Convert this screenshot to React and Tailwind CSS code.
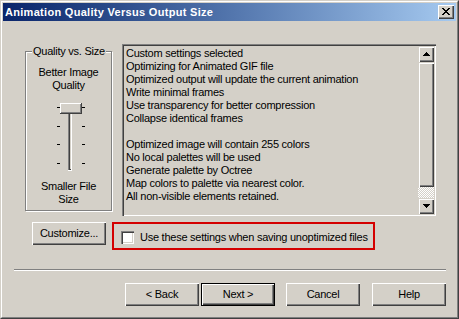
import React from 'react'

const raised = "shadow-[inset_1px_1px_0_#ffffff,inset_-1px_-1px_0_#404040,inset_-2px_-2px_0_#808080]"
const sunken = "shadow-[inset_1px_1px_0_#808080,inset_2px_2px_0_#404040,inset_-1px_-1px_0_#ffffff,inset_-2px_-2px_0_#d4d0c8]"
const scrollBtn = "shadow-[inset_1px_1px_0_#d4d0c8,inset_2px_2px_0_#ffffff,inset_-1px_-1px_0_#404040,inset_-2px_-2px_0_#808080]"

const lines = [
  "Custom settings selected",
  "Optimizing for Animated GIF file",
  "Optimized output will update the current animation",
  "Write minimal frames",
  "Use transparency for better compression",
  "Collapse identical frames",
  "",
  "Optimized image will contain 255 colors",
  "No local palettes will be used",
  "Generate palette by Octree",
  "Map colors to palette via nearest color.",
  "All non-visible elements retained.",
]

function CloseGlyph() {
  const px = [
    [0, 0], [1, 0], [6, 0], [7, 0],
    [1, 1], [2, 1], [5, 1], [6, 1],
    [2, 2], [3, 2], [4, 2], [5, 2],
    [3, 3], [4, 3],
    [2, 4], [3, 4], [4, 4], [5, 4],
    [1, 5], [2, 5], [5, 5], [6, 5],
    [0, 6], [1, 6], [6, 6], [7, 6],
  ]
  return (
    <svg width="8" height="7" shapeRendering="crispEdges">
      {px.map(([x, y]) => <rect key={x + "-" + y} x={x} y={y} width="1" height="1" fill="#000" />)}
    </svg>
  )
}

function Slider() {
  const ticks = [9, 28, 46, 65]
  return (
    <svg width="85" height="76" shapeRendering="crispEdges" className="block">
      {ticks.map((y) => (
        <g key={y}>
          <rect x="31" y={y} width="3" height="1" fill="#000" />
          <rect x="56" y={y} width="3" height="1" fill="#000" />
        </g>
      ))}
      {/* track */}
      <rect x="42" y="5" width="4" height="68" fill="#ffffff" />
      <rect x="42" y="5" width="3" height="67" fill="#808080" />
      <rect x="43" y="6" width="2" height="66" fill="#404040" />
      <rect x="44" y="6" width="1" height="65" fill="#d4d0c8" />
      {/* thumb */}
      <rect x="34" y="5" width="22" height="11" fill="#404040" />
      <rect x="34" y="5" width="21" height="10" fill="#ffffff" />
      <rect x="35" y="6" width="20" height="9" fill="#808080" />
      <rect x="35" y="6" width="19" height="8" fill="#d4d0c8" />
    </svg>
  )
}

function Arrow({ down }) {
  return (
    <svg width="7" height="4" shapeRendering="crispEdges">
      {down ? (
        <path d="M0 0h7v1h-1v1h-1v1h-1v1h-1v-1h-1v-1h-1v-1h-1z" fill="#000" />
      ) : (
        <path d="M3 0h1v1h1v1h1v1h1v1h-7v-1h1v-1h1v-1h1z" fill="#000" />
      )}
    </svg>
  )
}

function Button({ children, isDefault, className = "" }) {
  if (isDefault) {
    return (
      <div className={`w-[74px] h-[23px] border border-black ${className}`}>
        <div className={`w-full h-full bg-[#d4d0c8] flex items-center justify-center ${raised}`}>{children}</div>
      </div>
    )
  }
  return (
    <div className={`w-[74px] h-[23px] bg-[#d4d0c8] flex items-center justify-center ${raised} ${className}`}>
      {children}
    </div>
  )
}

export default function App() {
  return (
    <div className="w-[459px] h-[319px] bg-[#d4d0c8] text-[11px] leading-[13px] tracking-[-0.25px] text-black font-['Liberation_Sans',Arial,sans-serif]">
      <div className="w-full h-full border border-t-[#d4d0c8] border-l-[#d4d0c8] border-r-[#404040] border-b-[#404040]">
        <div className="w-full h-full border border-t-white border-l-white border-r-[#808080] border-b-[#808080] p-px flex flex-col">
          {/* title bar */}
          <div className="h-[18px] flex items-center justify-between bg-gradient-to-r from-[#0a246a] to-[#a6caf0] pl-[2px] pr-[2px]">
            <span className="text-white font-bold text-[11px] tracking-[0.3px]">Animation Quality Versus Output Size</span>
            <div className={`w-[16px] h-[14px] bg-[#d4d0c8] flex items-center justify-center ${raised}`}>
              <div className="ml-[-1px] mt-[-1px] flex"><CloseGlyph /></div>
            </div>
          </div>

          {/* main row */}
          <div className="flex items-start mt-[23px] pl-[22px]">
            <div className="relative mt-[7px] w-[87px] h-[160px] border border-[#808080] shadow-[inset_1px_1px_0_#ffffff,1px_1px_0_#ffffff]">
              <span className="absolute left-[6px] top-[-7px] px-[1px] bg-[#d4d0c8] whitespace-nowrap">Quality vs. Size</span>
              <div className="pt-[14px] text-center">
                <div>Better Image</div>
                <div>Quality</div>
              </div>
              <div className="mt-[6px]">
                <Slider />
              </div>
              <div className="mt-[6px] text-center">
                <div>Smaller File</div>
                <div>Size</div>
              </div>
            </div>

            <div className={`ml-[10px] w-[314px] h-[172px] p-[2px] flex ${sunken}`}>
              <div className="flex-1 pl-[2px] pt-[1px] whitespace-nowrap overflow-hidden">
                {lines.map((l, i) => (
                  <div key={i} className="h-[13px]">{l}</div>
                ))}
              </div>
              <div className="w-[16px] flex flex-col">
                <div className={`h-[16px] flex items-center justify-center ${scrollBtn}`}><Arrow /></div>
                <div className={`flex-1 ${scrollBtn}`} />
                <div className="h-[11px] bg-[repeating-conic-gradient(#ffffff_0_25%,#d4d0c8_0_50%)] bg-[length:2px_2px]" />
                <div className={`h-[16px] flex items-center justify-center ${scrollBtn}`}><Arrow down /></div>
              </div>
            </div>
          </div>

          {/* customize + checkbox row */}
          <div className="flex items-start mt-[6px] pl-[29px]">
            <Button>Customize...</Button>
            <div className="ml-[6px] w-[263px] h-[28px] border-2 border-[#d40000] flex items-center pl-[7px] pt-[2px] whitespace-nowrap">
              <div className={`w-[13px] h-[13px] shrink-0 bg-white ${sunken}`} />
              <span className="ml-[6px]">Use these settings when saving unoptimized files</span>
            </div>
          </div>

          {/* separator */}
          <div className="ml-[11px] mt-[19px] w-[432px] h-[2px] border-t border-t-[#808080] border-b border-b-white" />

          {/* buttons */}
          <div className="flex mt-[12px] pl-[122px]">
            <Button>&lt; Back</Button>
            <Button isDefault className="ml-[2px]">Next &gt;</Button>
            <Button className="ml-[11px]">Cancel</Button>
            <Button className="ml-[12px]">Help</Button>
          </div>
        </div>
      </div>
    </div>
  )
}
